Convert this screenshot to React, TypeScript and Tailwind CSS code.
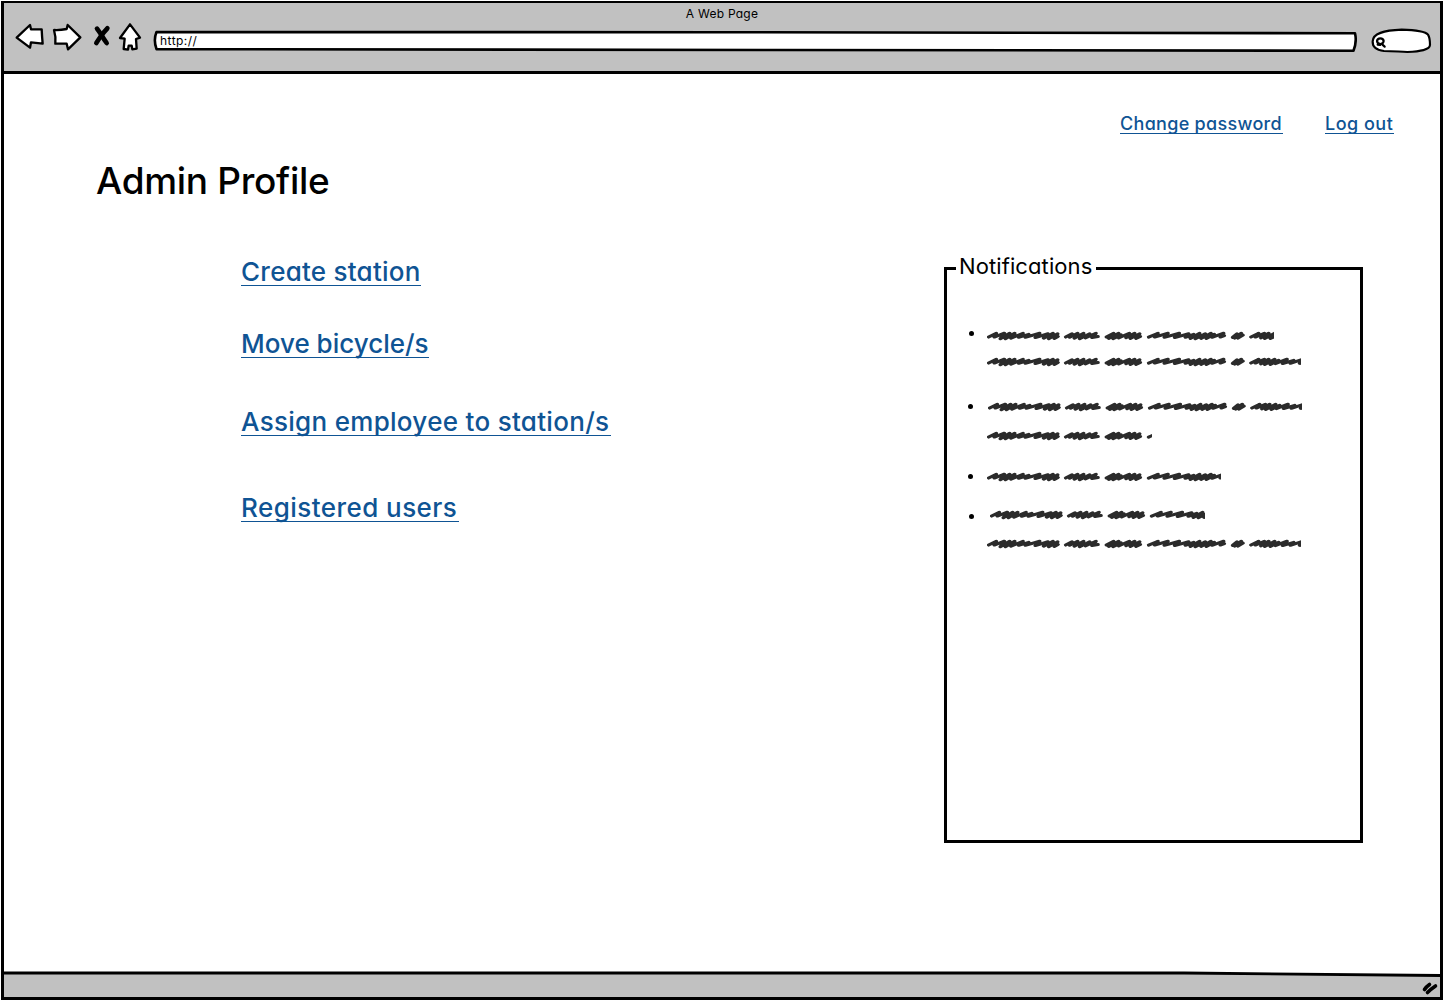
import React from "react";

const STROKES = [
  "M4 19L27 5L21 19L51 5L39 25L67 5L54 25L82 5L71 23L107 5L94 20L124 9L114 20L157 5L144 21L182 7L169 23L197 5L184 25L211 7L201 24L212 17",
  "M235 19L254 7L247 20L271 5L261 23L289 5L277 25L307 7L294 22L326 5L314 21L332 17",
  "M357 19L379 5L364 24L394 5L377 25L401 11L394 22L426 5L416 21L442 5L429 24L457 7L446 24L459 17",
  "M484 19L512 5L502 19L542 5L531 20L576 5L562 21L604 7L594 20L619 9L609 24L637 5L624 25L654 7L641 24L671 5L657 24L681 9L674 20L709 5L699 19L711 14",
  "M736 20L749 7L742 23L762 5L752 23L767 12",
  "M791 19L814 5L804 19L831 5L821 22L844 5L832 24L862 5L849 24L874 9L864 21L899 5L886 21L919 9L909 20L946 5L937 20",
];

function Scribble({ width, className = "" }: { width: number; className?: string }) {
  return (
    <svg
      className={`block h-[10px] shrink-0 overflow-hidden ${className}`}
      style={{ width }}
      viewBox={`0 0 ${width * 3} 30`}
      fill="none"
      stroke="#2b2b2b"
      strokeWidth="11"
      strokeLinecap="round"
      strokeLinejoin="round"
    >
      <g transform="translate(1 2.6) scale(1 0.82)">
        {STROKES.map((d) => (
          <path key={d} d={d} />
        ))}
      </g>
    </svg>
  );
}

function Dot({ className = "" }: { className?: string }) {
  return <span className={`block size-[5px] shrink-0 rounded-full bg-black ${className}`} />;
}

function Link({ className, children }: { className: string; children: React.ReactNode }) {
  return (
    <a
      href="#"
      className={`block whitespace-nowrap border-b border-[#0f5494] font-medium text-[#0f5494] ${className}`}
    >
      {children}
    </a>
  );
}

function Toolbar() {
  return (
    <div className="flex h-[56px] items-start">
      <svg className="mt-[5px] ml-[11px] h-[30px] w-[129px] shrink-0" viewBox="45 66 387 90" strokeLinejoin="round" strokeLinecap="round">
        <g fill="#fff" stroke="#000" strokeWidth="7">
          <path d="M50 113L90 75L93 88L125 88Q126 110 128 131L93 127L90 143Z" />
          <path d="M162 90Q180 91 200 87L203 75L241 112L204 148L200 131L166 131Q168 110 162 90Z" />
          <path d="M390 73L420 113L408 117L410 146L397 148L395 137L386 137L384 149L371 147L374 116L360 114Z" />
        </g>
        <g fill="none" stroke="#000" strokeWidth="14">
          <path d="M291 86Q300 98 306 108T320 129" />
          <path d="M322 85Q310 98 303 108T289 129" />
        </g>
      </svg>
      <div className="relative mt-[12px] ml-[9px] h-[23px] w-[1204px] shrink-0">
        <svg className="absolute inset-0 h-[23px] w-[1204px]" viewBox="0 0 1204 23" fill="#fff" stroke="#000" strokeWidth="2.6" strokeLinejoin="round">
          <path d="M3.500 3.100L560 3.200L1202 4.300Q1204 13 1200.500 21.700L620 21L3.500 20.100Q0.200 11 3.500 3.100Z" />
        </svg>
        <span className="relative block pt-[4px] pl-[7px] text-[12px] leading-[16px] tracking-[0.45px]">http://</span>
      </div>
      <svg className="mt-[11px] ml-[13px] h-[28px] w-[64px] shrink-0" viewBox="120 84 192 84" stroke="#000" strokeLinecap="round" strokeLinejoin="round">
        <path d="M128 124C129 100 160 91 215 89C255 90 285 93 294 104Q300 113 300 135C299 150 270 154 232 156C205 155 190 153 162 153C138 150 127 141 128 124Z" fill="#fff" strokeWidth="6.500" />
        <path d="M151 115Q160 115 161 123Q160 132 151 132Q142 131 141 123Q142 115 151 115ZM154 131L164 140M143 134L150 135" fill="none" strokeWidth="6.500" />
      </svg>
    </div>
  );
}

export default function App() {
  return (
    <div className="flex h-[1001px] w-[1444px] flex-col bg-white p-px font-['Inter',sans-serif] text-black [font-feature-settings:'cv11']">
      <div className="flex flex-1 flex-col border-[3px] border-t-2 border-black">
        <header className="h-[71px] border-b-[3px] border-black bg-[#c1c1c1]">
          <h1 className="h-[14px] pt-[3px] text-center text-[12px] leading-[16px] tracking-[0.25px]">A Web Page</h1>
          <Toolbar />
        </header>

        <main className="flex flex-1">
          <div className="flex w-[940px] flex-col">
            <h2 className="mt-[83px] ml-[92px] whitespace-nowrap text-[37px] leading-[48px] font-medium tracking-[-0.3px]">
              Admin Profile
            </h2>
            <nav className="ml-[237px] flex flex-col text-[26px] leading-[34px]">
              <Link className="mt-[50px] h-[31px] w-[180px] tracking-[0.25px]">Create station</Link>
              <Link className="mt-[41px] h-[31px] w-[188px]">Move bicycle/s</Link>
              <Link className="mt-[47px] h-[31px] w-[370px] tracking-[0.3px]">Assign employee to station/s</Link>
              <Link className="mt-[55px] h-[31px] w-[218px] tracking-[0.45px]">Registered users</Link>
            </nav>
          </div>

          <div className="flex flex-1 flex-col">
            <div className="mt-[38px] ml-[176px] flex gap-[42px] text-[18px] leading-[24px]">
              <Link className="h-[22px] w-[163px] tracking-[0.3px]">Change password</Link>
              <Link className="h-[22px] w-[69px] tracking-[0.5px]">Log out</Link>
            </div>
            <section className="mt-[133px] h-[576px] w-[419px] border-[3px] border-black">
              <h3 className="-mt-[18px] ml-[9px] h-[28px] w-[140px] whitespace-nowrap bg-white pl-[3px] text-[22px] leading-[28px] tracking-[0.1px]">
                Notifications
              </h3>
              <ul className="ml-[21px]">
                <li className="mt-[51px] flex">
                  <Dot className="ml-px" />
                  <div className="ml-[13px] flex flex-col gap-[16px]">
                    <Scribble width={287} />
                    <Scribble width={314} />
                  </div>
                </li>
                <li className="mt-[35px] flex">
                  <Dot className="mt-[2px]" />
                  <div className="ml-[14px] flex flex-col gap-[19px]">
                    <Scribble width={314} className="ml-px" />
                    <Scribble width={165} />
                  </div>
                </li>
                <li className="mt-[31px] flex">
                  <Dot className="mt-[2px]" />
                  <Scribble width={234} className="ml-[14px]" />
                </li>
                <li className="mt-[28px] flex">
                  <Dot className="mt-[4px] ml-px" />
                  <div className="ml-[13px] flex flex-col gap-[19px]">
                    <Scribble width={215} className="ml-[3px]" />
                    <Scribble width={314} />
                  </div>
                </li>
              </ul>
            </section>
          </div>
        </main>

        <footer className="flex h-[26px] shrink-0 flex-col">
          <svg className="h-[26px] w-[1436px]" viewBox="0 0 1436 26">
            <path d="M0 2.500L1200 2.500L1436 4.500V26H0Z" fill="#c1c1c1" />
            <path d="M0 2L1180 2L1436 4.500" fill="none" stroke="#000" strokeWidth="2.800" />
            <path d="M1420.500 18.500Q1422 16 1425.500 13.500M1423.500 21.500Q1427 18 1431.500 15" fill="none" stroke="#000" strokeWidth="3.600" strokeLinecap="round" />
          </svg>
        </footer>
      </div>
    </div>
  );
}
